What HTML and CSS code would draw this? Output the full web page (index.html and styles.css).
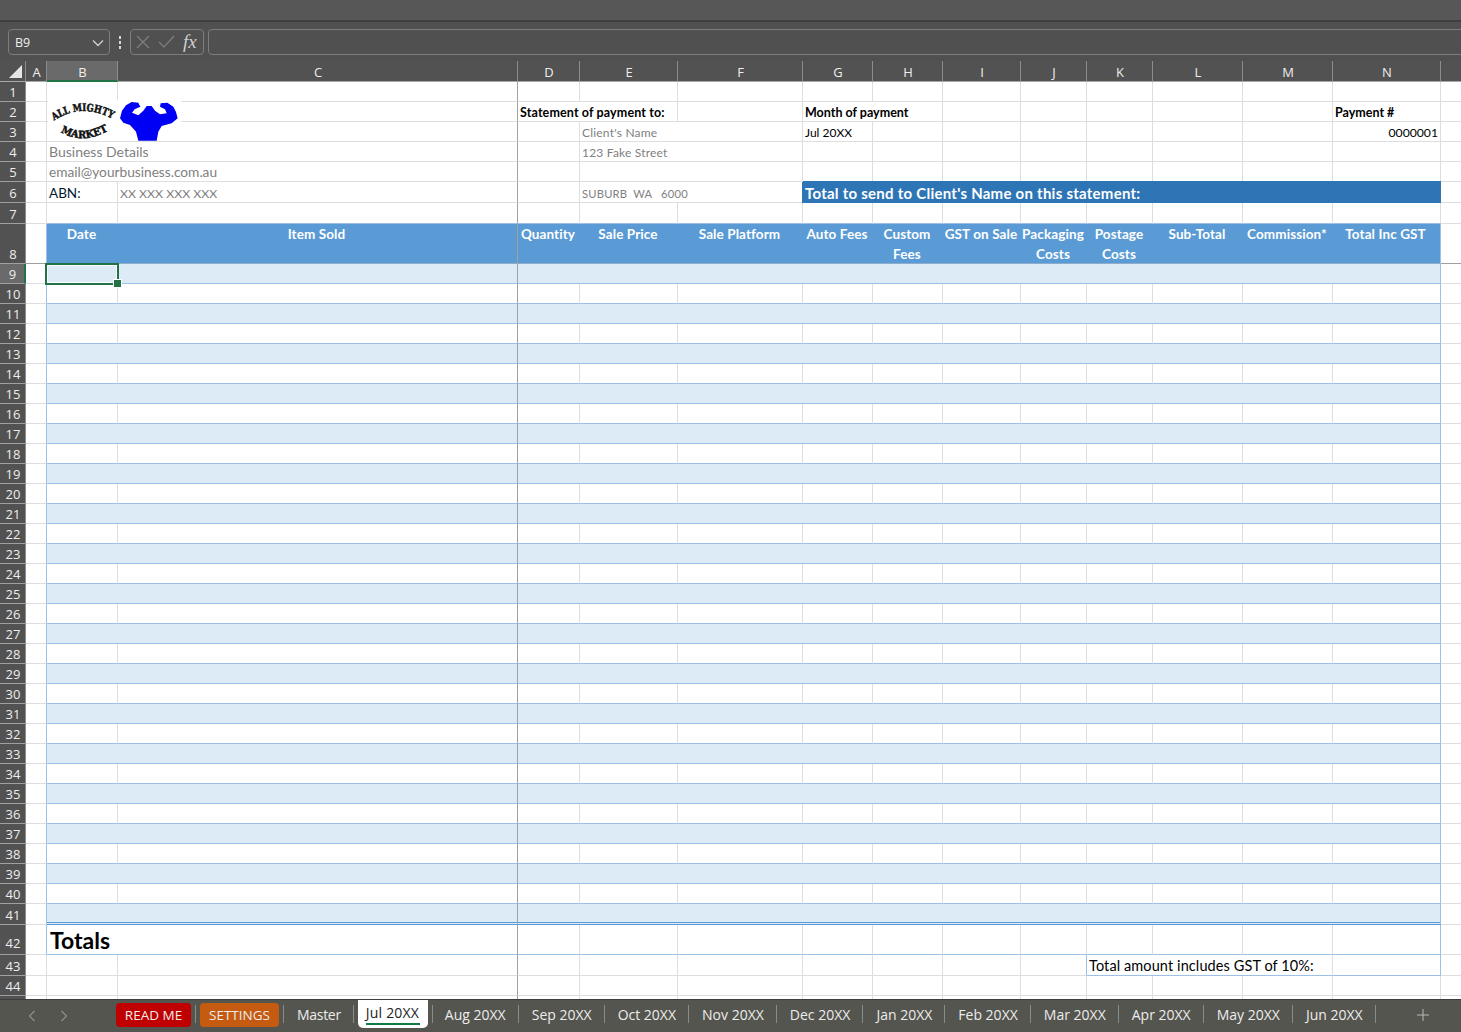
FILE: index.html
```html
<!DOCTYPE html>
<html lang="en">

<head>
  <meta charset="UTF-8" />
  <title>Jul 20XX - Statement</title>
  <link rel="stylesheet" href="styles.css">
</head>

<body>
  <div class="titlebar"></div>

  <div class="formulabar">
    <div class="namebox">
      <span>B9</span>
      <svg class="chev" width="12" height="8" viewBox="0 0 12 8"><path d="M1 1.5 L6 6.5 L11 1.5" /></svg>
    </div>
    <div class="dots"><i></i><i></i><i></i></div>
    <div class="fxbox">
      <svg width="16" height="16" viewBox="0 0 16 16"><path d="M2 2 L14 14 M14 2 L2 14" /></svg>
      <svg width="18" height="16" viewBox="0 0 18 16"><path d="M2 8 L7 13 L17 2" /></svg>
      <span class="fx">fx</span>
    </div>
    <div class="formulainput"></div>
  </div>

  <div class="sheetwrap">
    <table class="sheet">
      <colgroup>
        <col class="c-head"><col class="c-a"><col class="c-b"><col class="c-c"><col class="c-d"><col class="c-e"><col class="c-f"><col class="c-g"><col class="c-h"><col class="c-i"><col class="c-j"><col class="c-k"><col class="c-l"><col class="c-m"><col class="c-n"><col class="c-o">
      </colgroup>
      <thead>
        <tr>
          <th class="corner"><div class="tri"></div></th>
          <th>A</th><th class="colsel">B</th><th>C</th><th>D</th><th>E</th><th>F</th><th>G</th><th>H</th><th>I</th><th>J</th><th>K</th><th>L</th><th>M</th><th>N</th><th class="open"></th>
        </tr>
      </thead>
      <tbody>
        <tr>
          <th>1</th><td></td><td></td><td class="fz"></td><td></td><td></td><td></td><td></td><td></td><td></td><td></td><td></td><td></td><td></td><td></td><td></td>
        </tr>
        <tr>
          <th>2</th><td></td><td></td><td class="fz"></td>
          <td colspan="2" class="bold stmt">Statement of payment to:</td><td></td>
          <td colspan="2" class="bold">Month of payment</td><td></td><td></td><td></td><td></td><td></td>
          <td class="bold">Payment #</td><td></td>
        </tr>
        <tr>
          <th>3</th><td></td><td></td><td class="fz"></td><td></td>
          <td colspan="2" class="addr">Client's Name</td>
          <td class="small">Jul 20XX</td><td></td><td></td><td></td><td></td><td></td><td></td>
          <td class="num">0000001</td><td></td>
        </tr>
        <tr>
          <th>4</th><td></td><td colspan="2" class="fz biz">Business Details</td><td></td>
          <td colspan="2" class="addr">123 Fake Street</td>
          <td></td><td></td><td></td><td></td><td></td><td></td><td></td><td></td><td></td>
        </tr>
        <tr>
          <th>5</th><td></td><td colspan="2" class="fz email">email@yourbusiness.com.au</td><td></td>
          <td colspan="2"></td>
          <td></td><td></td><td></td><td></td><td></td><td></td><td></td><td></td><td></td>
        </tr>
        <tr class="r6">
          <th>6</th><td></td><td class="abn">ABN:</td><td class="fz abnval">XX XXX XXX XXX</td><td></td>
          <td colspan="2" class="addr suburb">SUBURB&nbsp; WA &nbsp; 6000</td>
          <td colspan="8" class="banner">Total to send to Client's Name on this statement:</td><td></td>
        </tr>
        <tr class="r7">
          <th>7</th><td></td><td></td><td class="fz"></td><td></td><td></td><td></td><td></td><td></td><td></td><td></td><td></td><td></td><td></td><td></td><td></td>
        </tr>
        <tr class="r8">
          <th>8</th><td class="edge"></td>
          <td class="hd">Date</td><td class="hd fz">Item Sold</td><td class="hd">Quantity</td><td class="hd">Sale Price</td><td class="hd">Sale Platform</td><td class="hd">Auto Fees</td>
          <td class="hd">Custom<br>Fees</td><td class="hd">GST on Sale</td><td class="hd">Packaging<br>Costs</td><td class="hd">Postage<br>Costs</td><td class="hd">Sub-Total</td><td class="hd">Commission*</td><td class="hd last">Total Inc GST</td><td class="fzrow"></td>
        </tr>
      </tbody>
      <tbody id="rows"></tbody>
      <tbody>
        <tr class="r42">
          <th>42</th><td class="edge"></td><td colspan="2" class="totals fz">Totals</td><td class="ln"></td><td class="ln"></td><td class="ln"></td><td class="ln"></td><td class="ln"></td><td class="ln"></td><td class="ln"></td><td class="ln"></td><td class="ln"></td><td class="ln"></td><td class="ln last"></td><td></td>
        </tr>
        <tr class="r43">
          <th>43</th><td></td><td></td><td class="fz"></td><td></td><td></td><td></td><td></td><td></td><td></td><td class="edge"></td>
          <td colspan="3" class="gst">Total amount includes GST of 10%:</td><td class="ln last"></td><td></td>
        </tr>
        <tr>
          <th>44</th><td></td><td></td><td class="fz"></td><td></td><td></td><td></td><td></td><td></td><td></td><td></td><td></td><td></td><td></td><td></td><td></td>
        </tr>
        <tr>
          <th></th><td></td><td></td><td class="fz"></td><td></td><td></td><td></td><td></td><td></td><td></td><td></td><td></td><td></td><td></td><td></td><td></td>
        </tr>
      </tbody>
    </table>

    <svg class="logo" width="133" height="41" viewBox="54 30 399 123">
      <defs>
        <path id="arc-top" d="M72 92 Q160 34 256 92" />
        <path id="arc-bot" d="M92 126 Q160 166 238 120" />
      </defs>
      <rect x="54" y="30" width="399" height="123" fill="#fff" />
      <text class="logotext"><textPath href="#arc-top" textLength="184" lengthAdjust="spacingAndGlyphs">ALL MIGHTY</textPath></text>
      <text class="logotext"><textPath href="#arc-bot" textLength="150" lengthAdjust="spacingAndGlyphs">MARKET</textPath></text>
      <path fill="#0000f5" d="M270 85 L276 62 L288 46 L305 36 L325 38 L331 50 L314 58 L306 68 L325 76 L340 62 L350 48 L365 48 L375 62 L390 73 L410 70 L405 58 L390 50 L392 40 L412 38 L430 50 L438 66 L443 85 L425 100 L395 108 L385 125 L380 152 L325 152 L318 125 L300 105 L280 98 Z" />
    </svg>
  </div>

  <div class="tabbar">
    <svg class="nav first" width="8" height="12" viewBox="0 0 8 12"><path d="M6.5 1 L1.5 6 L6.5 11" /></svg>
    <svg class="nav" width="8" height="12" viewBox="0 0 8 12"><path d="M1.5 1 L6.5 6 L1.5 11" /></svg>
    <div class="tabs">
      <div class="tab red">READ ME</div>
      <div class="tab orange">SETTINGS</div>
      <div class="tab master">Master</div>
      <div class="tab active"><span>Jul 20XX</span></div>
      <div class="tab">Aug 20XX</div>
      <div class="tab">Sep 20XX</div>
      <div class="tab">Oct 20XX</div>
      <div class="tab">Nov 20XX</div>
      <div class="tab">Dec 20XX</div>
      <div class="tab">Jan 20XX</div>
      <div class="tab">Feb 20XX</div>
      <div class="tab">Mar 20XX</div>
      <div class="tab">Apr 20XX</div>
      <div class="tab">May 20XX</div>
      <div class="tab">Jun 20XX</div>
    </div>
    <svg class="plus" width="12" height="12" viewBox="0 0 12 12"><path d="M6 0 V12 M0 6 H12" /></svg>
  </div>

  <script src="sheet.js"></script>
</body>
</html>
```

FILE: styles.css
```css
* {
    box-sizing: border-box;
}
html, body {
    margin: 0;
    height: 100%;
    overflow: hidden;
    background: #525252;
}
body {
    display: flex;
    flex-direction: column;
    width: 1461px;
    height: 1032px;
    font-family: "Lato", "Liberation Sans", sans-serif;
}

/* top of the window */
.titlebar {
    height: 22px;
    flex: none;
    background: #575757;
    border-bottom: 2px solid #3f3f3f;
}
.formulabar {
    height: 39px;
    flex: none;
    display: flex;
    align-items: flex-start;
    padding: 7px 0 0 8px;
    background: #505050;
    font-family: "Open Sans", sans-serif;
}
.namebox {
    width: 102px;
    height: 26px;
    flex: none;
    display: flex;
    align-items: center;
    justify-content: space-between;
    padding: 1px 5px 0 6px;
    border: 1px solid #7d7d7d;
    border-radius: 4px;
    color: #eeeeee;
    font-size: 12.5px;
}
.chev path {
    fill: none;
    stroke: #d0d0d0;
    stroke-width: 1.3;
}
.dots {
    width: 20px;
    flex: none;
    height: 26px;
    display: flex;
    flex-direction: column;
    align-items: center;
    justify-content: center;
    gap: 2px;
}
.dots i {
    width: 2px;
    height: 3px;
    background: #d8d8d8;
}
.fxbox {
    width: 74px;
    height: 26px;
    flex: none;
    display: flex;
    align-items: center;
    gap: 6px;
    padding-left: 4px;
    border: 1px solid #7d7d7d;
    border-radius: 4px;
}
.fxbox svg path {
    fill: none;
    stroke: #808080;
    stroke-width: 1.2;
}
.fx {
    color: #cfcfcf;
    font: italic 19px "Liberation Serif", serif;
    margin-left: 2px;
}
.formulainput {
    flex: 1;
    height: 26px;
    margin-left: 4px;
    margin-right: -6px;
    border: 1px solid #7d7d7d;
    border-radius: 4px 0 0 4px;
}

/* the grid */
.sheetwrap {
    position: relative;
    flex: 1;
    overflow: hidden;
    background: #fff;
}
.sheet {
    table-layout: fixed;
    width: 1481px;
    border-collapse: separate;
    border-spacing: 0;
    font-size: 14px;
    color: #000;
}
.c-head { width: 26px; }
.c-a { width: 21px; }
.c-b { width: 71px; }
.c-c { width: 400px; }
.c-d { width: 62px; }
.c-e { width: 98px; }
.c-f { width: 125px; }
.c-g { width: 70px; }
.c-h { width: 70px; }
.c-i { width: 78px; }
.c-j { width: 66px; }
.c-k { width: 66px; }
.c-l { width: 90px; }
.c-m { width: 90px; }
.c-n { width: 108px; }
.c-o { width: 40px; }

.sheet tr {
    height: 20px;
}
.sheet td {
    padding: 0 2px;
    line-height: 16px;
    white-space: nowrap;
    border-right: 1px solid #dedede;
    border-bottom: 1px solid #dedede;
    vertical-align: middle;
}
.sheet th {
    padding: 0 0 1px 1px;
    font-family: "Open Sans", sans-serif;
    font-weight: 400;
    font-size: 13px;
    line-height: 16px;
    color: #eeeeee;
    background: #525252;
    border-right: 1px solid #8c8c8c;
    border-bottom: 1px solid #a0a0a0;
    vertical-align: bottom;
}
.sheet thead tr {
    height: 21px;
}
.sheet thead th {
    border-bottom: 1px solid #a8a8a8;
    vertical-align: middle;
    padding-top: 2px;
    padding-bottom: 0;
}
.sheet thead th.open {
    border-right: none;
}
.sheet thead th.colsel {
    background: #6a6a6a;
    border-bottom: 2px solid #217346;
}
.corner {
    position: relative;
}
.tri {
    position: absolute;
    right: 3px;
    bottom: 3px;
    width: 13px;
    height: 13px;
    background: #e6e6e6;
    clip-path: polygon(100% 0, 100% 100%, 0 100%);
}

.sheet td.fz {
    border-right: 1px solid #a0a0a0;
}
.sheet .r6,
.sheet .r7 {
    height: 21px;
}
.r7 td:nth-child(n+3):nth-child(-n+15) {
    border-bottom-color: #9bc2e6;
}
.sheet .r8 {
    height: 40px;
}
.sheet .r42 {
    height: 30px;
}
.sheet .r42 th {
    padding-bottom: 3px;
}
.sheet .r43 {
    height: 21px;
}

.sheet td.bold {
    font-size: 12.5px;
    font-weight: 700;
    padding-top: 2px;
}
.sheet td.stmt {
    letter-spacing: .13px;
}
.sheet td.small {
    font-size: 12px;
    padding-top: 2px;
}
.sheet td.num {
    font-size: 12.2px;
    text-align: right;
    padding-top: 2px;
}
.sheet td.addr {
    font-size: 12px;
    color: #808080;
    padding-left: 2px;
    padding-top: 2px;
    letter-spacing: .2px;
}
.sheet td.suburb {
    font-size: 11.2px;
    padding-top: 3px;
}
.sheet td.biz {
    font-size: 14px;
    color: #7f7f7f;
}
.sheet td.email {
    font-size: 13.7px;
    color: #808080;
}
.sheet td.abnval {
    font-size: 12.3px;
    color: #808080;
    padding-top: 3px;
}
.sheet td.abn {
    font-size: 13.5px;
    color: #00172e;
    padding-top: 2px;
}
.sheet td.banner {
    background: #2e75b6;
    box-shadow: 0 -1px 0 #2e75b6, -1px 0 0 #2e75b6;
    color: #fff;
    font-size: 15px;
    font-weight: 700;
    letter-spacing: .25px;
    border-right: none;
    border-bottom: 1px solid #2e75b6;
    padding-top: 1px;
}

/* table header row */
.sheet td.hd {
    background: #5b9bd5;
    box-shadow: inset 0 -1px 0 #8eaccb;
    color: #fff;
    font-size: 13.5px;
    font-weight: 700;
    letter-spacing: .1px;
    line-height: 19.5px;
    text-align: center;
    vertical-align: top;
    padding: 1px 2px 0 0;
    border-right: none;
    border-bottom: none;
}
.sheet td.hd.fz {
    border-right: 1px solid #a0a0a0;
}
.sheet td.hd.last {
    border-right: 1px solid #9bc2e6;
}
.sheet td.edge {
    border-right: 1px solid #9bc2e6;
}
.sheet td.fzrow {
    border-bottom: 1px solid #a0a0a0;
}
.r8 td.edge {
    border-bottom: 1px solid #a0a0a0;
}

/* body rows, built in sheet.js */
.sheet td.ln {
    border-bottom: 1px solid #9bc2e6;
}
.sheet td.band {
    background: #ddebf7;
    border-right: none;
}
.sheet td.band.fz {
    border-right: 1px solid #a0a0a0;
}
.sheet td.last {
    border-right: 1px solid #9bc2e6;
}
.sheet .r41 {
    height: 21px;
}
.sheet .r41 td.ln {
    border-bottom: 3px double #5b9bd5;
}
.sheet th.rowsel {
    background: #6a6a6a;
    border-right: 2px solid #217346;
}
.selcell {
    position: relative;
}
.sel {
    position: absolute;
    left: -2px;
    top: -1px;
    width: 74px;
    height: 22px;
    border: 2px solid #217346;
    box-shadow: inset 0 0 0 1px #fff;
}
.sel::after {
    content: "";
    position: absolute;
    right: -5px;
    bottom: -5px;
    width: 7px;
    height: 7px;
    background: #217346;
    border: 1px solid #fff;
}

.sheet td.totals {
    font-size: 23px;
    font-weight: 700;
    padding-left: 3px;
    padding-top: 0;
    border-bottom: 1px solid #9bc2e6;
}
.sheet td.gst {
    font-size: 14.5px;
    padding-left: 2px;
    padding-top: 2px;
    letter-spacing: .1px;
    border-right: 1px solid #dedede;
    border-bottom: 1px solid #9bc2e6;
}

.logo {
    position: absolute;
    left: 48px;
    top: 39px;
}
.logotext {
    font-family: "DejaVu Serif", serif;
    font-weight: 700;
    font-size: 31px;
    fill: #111;
    stroke: #111;
    stroke-width: 1.5;
}

/* sheet tabs */
.tabbar {
    height: 33px;
    flex: none;
    display: flex;
    align-items: flex-start;
    background: #55554f;
    border-top: 1px solid #3d3d3d;
    font-family: "Open Sans", sans-serif;
    font-size: 14px;
    color: #ececec;
    position: relative;
}
.nav {
    flex: none;
    margin-top: 10px;
    margin-left: 24px;
}
.nav.first {
    margin-left: 28px;
}
.nav path {
    fill: none;
    stroke: #8f8f8f;
    stroke-width: 1.2;
}
.tabs {
    display: flex;
    margin-left: 48px;
    margin-top: 3px;
}
.tab {
    position: relative;
    height: 24px;
    line-height: 24px;
    padding: 0 13px;
    white-space: nowrap;
}
.tab::after {
    content: "";
    position: absolute;
    right: 0;
    top: 2px;
    height: 18px;
    width: 1px;
    background: #8a8a86;
}
.tab.red {
    background: #c00000;
    border-radius: 4px;
    width: 75px;
    padding: 0;
    text-align: center;
    font-size: 13.5px;
    margin-right: 9px;
}
.tab.orange {
    background: #c55a11;
    border-radius: 4px;
    width: 79px;
    padding: 0;
    text-align: center;
    font-size: 13.5px;
    margin-right: 5px;
}
.tab.red::after,
.tab.orange::after {
    right: -5px;
}
.tab.master {
    letter-spacing: -.3px;
}
.tab.active {
    margin: -3px 4px 0 4px;
    width: 70px;
    height: 28px;
    line-height: 26px;
    padding: 0 8px;
    background: #fff;
    color: #222;
    letter-spacing: .2px;
    border-radius: 0 0 5px 5px;
}
.tab.active span {
    display: block;
    height: 25px;
    border-bottom: 2px solid #107c41;
}
.tab.active::after {
    right: -5px;
    top: 5px;
}
.plus {
    position: absolute;
    left: 1417px;
    top: 9px;
}
.plus path {
    fill: none;
    stroke: #b8b8b8;
    stroke-width: 1;
}
```

FILE: sheet.js
```js
"use strict";
// Rows 9 to 41 are all alike: striped, 14 columns of empty cells
const rows = document.getElementById("rows");

for (let n = 9; n <= 41; n++) {
  const tr = document.createElement("tr");
  if (n === 41) tr.className = "r41";
  const striped = n % 2 === 1;

  const head = document.createElement("th");
  head.textContent = n;
  if (n === 9) head.className = "rowsel";
  tr.appendChild(head);

  for (let col = 0; col < 15; col++) {
    const td = document.createElement("td");
    if (col === 0) {
      td.className = "edge";
    } else if (col < 14) {
      td.classList.add("ln");
      if (striped) td.classList.add("band");
      if (col === 2) td.classList.add("fz");
      if (col === 13) td.classList.add("last");
    }
    if (n === 9 && col === 1) {
      td.classList.add("selcell");
      td.innerHTML = '<div class="sel"></div>';
    }
    tr.appendChild(td);
  }
  rows.appendChild(tr);
}
```
